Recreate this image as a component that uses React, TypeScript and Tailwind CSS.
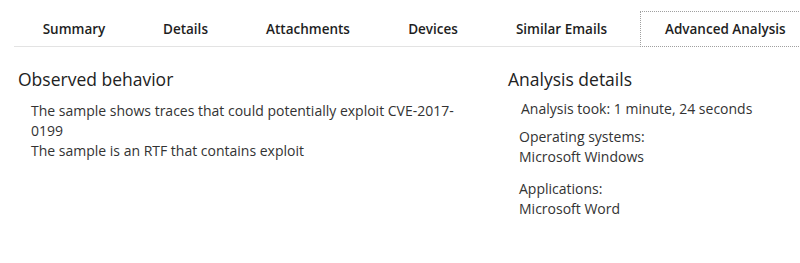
import React from "react";

const tabs: { label: string; w: string }[] = [
  { label: "Summary", w: "w-[120px]" },
  { label: "Details", w: "w-[103px]" },
  { label: "Attachments", w: "w-[142px]" },
  { label: "Devices", w: "w-[108px]" },
  { label: "Similar Emails", w: "w-[149px]" },
];

export default function App() {
  return (
    <div
      className="w-[800px] h-[263px] bg-white overflow-hidden text-[#222]"
      style={{ fontFamily: '"Open Sans", "Noto Sans", sans-serif' }}
    >
      <div className="pt-[11px] pl-[14px]">
        <div className="flex items-end border-b border-[#e3e3e3] w-[1000px]">
          {tabs.map((t) => (
            <div
              key={t.label}
              className={`${t.w} h-[34px] flex items-center justify-center text-[13.5px] font-semibold text-[#1e1e1e] whitespace-nowrap`}
            >
              {t.label}
            </div>
          ))}
          <div className="ml-[4px] -mb-px h-[36px] pl-[24px] pr-[40px] flex items-center bg-white border border-dotted border-[#a0a0a0] text-[13.5px] font-semibold text-[#1e1e1e] whitespace-nowrap">
            Advanced Analysis
          </div>
        </div>
      </div>

      <div className="flex pt-[20px]">
        <div className="w-[490px] pl-[18px]">
          <h2 className="text-[17.5px] leading-[24px] font-normal text-[#222]">Observed behavior</h2>
          <div className="pl-[13px] mt-[10px] text-[14px] leading-[20px] text-[#333]">
            <p>
              The sample shows traces that could potentially exploit CVE-2017-
              <br />
              0199
            </p>
            <p>The sample is an RTF that contains exploit</p>
          </div>
        </div>
        <div className="pl-[18px]">
          <h2 className="text-[17.5px] leading-[24px] font-normal text-[#222]">Analysis details</h2>
          <div className="pl-[13px] mt-[8px] text-[14px] leading-[20px] text-[#333]">
            <p>Analysis took: 1 minute, 24 seconds</p>
          </div>
          <div className="pl-[11px] mt-[8px] text-[14px] leading-[20px] text-[#333]">
            <p>Operating systems:</p>
            <p>Microsoft Windows</p>
          </div>
          <div className="pl-[11px] mt-[12px] text-[14px] leading-[20px] text-[#333]">
            <p>Applications:</p>
            <p>Microsoft Word</p>
          </div>
        </div>
      </div>
    </div>
  );
}
